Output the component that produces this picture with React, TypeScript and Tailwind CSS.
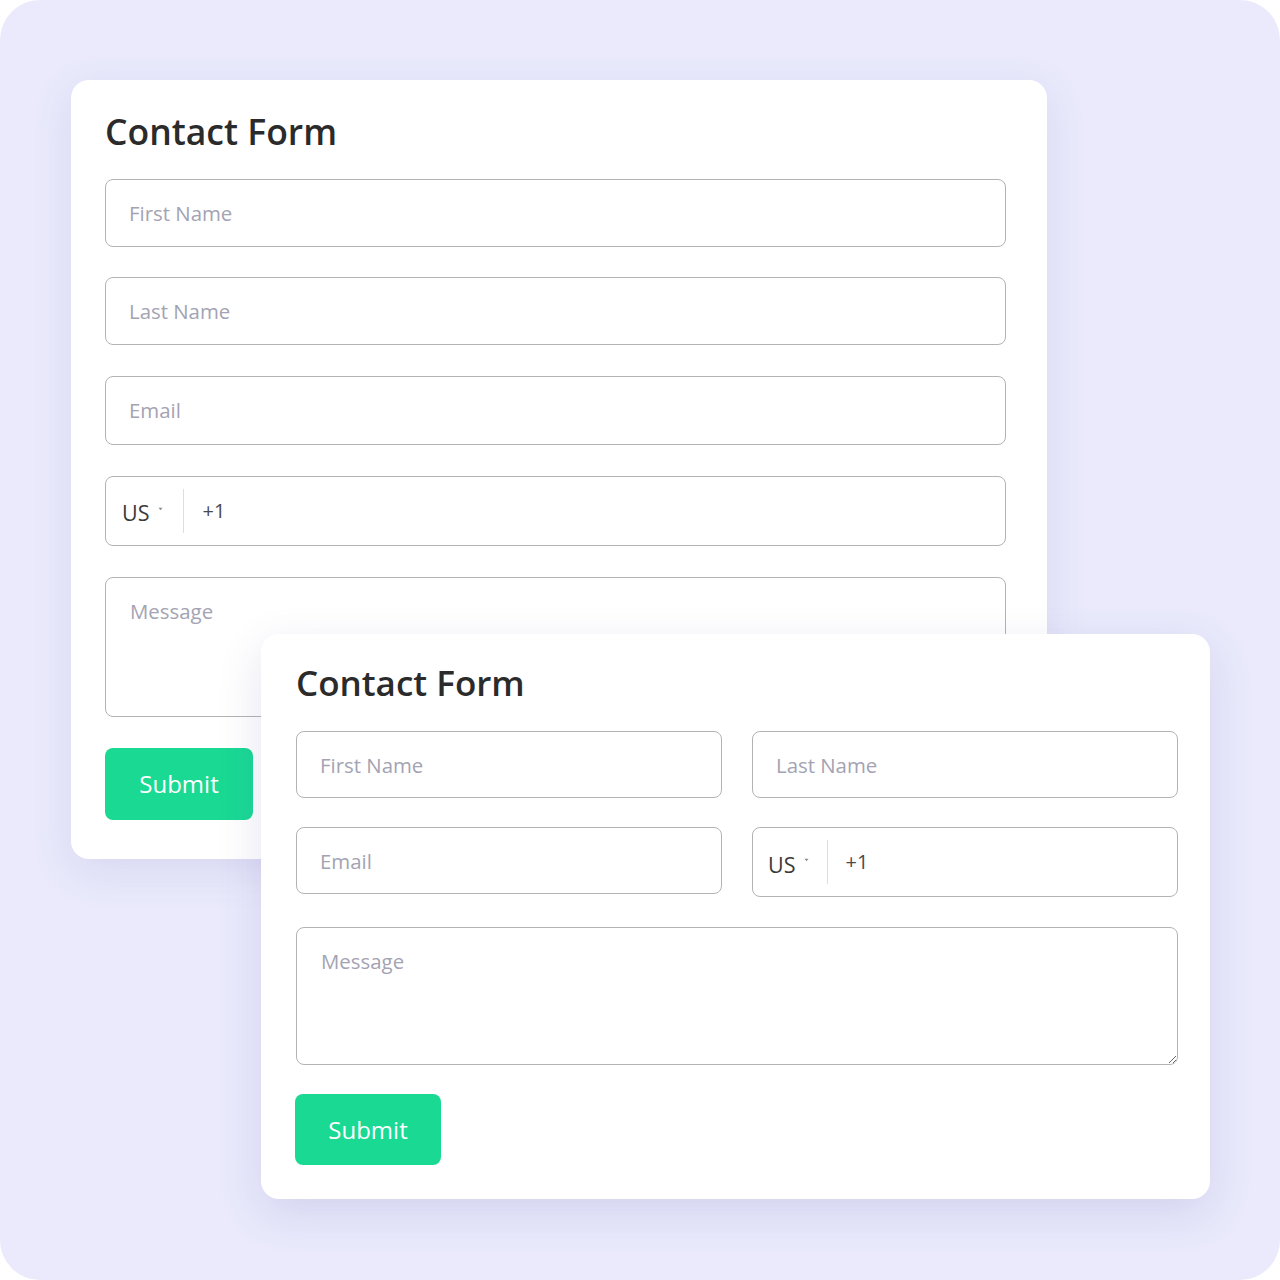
import React from "react";

const font = { fontFamily: '"Open Sans", "Noto Sans", sans-serif' };

function Field({ placeholder, className }: { placeholder: string; className: string }) {
  return (
    <input
      placeholder={placeholder}
      className={
        "block w-full rounded-[8px] border border-[#b3b3b3] bg-white px-[23px] text-[20.4px] text-[#333] outline-none placeholder:text-[#a3a3b3] " +
        className
      }
      style={font}
    />
  );
}

function Caret() {
  return (
    <svg width="5" height="4" viewBox="0 0 5 4" className="ml-[9px] mt-[-4px]">
      <path d="M0.5 0.8 L4.5 0.8 L2.5 3.2 Z" fill="#8a8a8a" />
    </svg>
  );
}

function Phone({ className, usPad, dividerGap }: { className: string; usPad: string; dividerGap: string }) {
  return (
    <div
      className={
        "flex w-full items-center rounded-[8px] border border-[#b3b3b3] bg-white " + className
      }
      style={font}
    >
      <div className={"flex items-center " + usPad}>
        <span className="mt-[6px] text-[21.5px] text-[#3a3a3a]">US</span>
        <Caret />
      </div>
      <div className={"h-[44px] w-px bg-[#dedede] " + dividerGap} />
      <span className="text-[20px] text-[#4a4a4a]">+1</span>
    </div>
  );
}

function Message({ className }: { className: string }) {
  return (
    <textarea
      placeholder="Message"
      className={
        "block w-full rounded-[8px] border border-[#b3b3b3] bg-white px-[24px] pt-[18px] text-[20.4px] text-[#333] outline-none placeholder:text-[#a3a3b3] " +
        className
      }
      style={font}
    />
  );
}

function Submit({ className }: { className: string }) {
  return (
    <button
      className={
        "flex items-center justify-center rounded-[8px] bg-[#19d993] text-[24px] text-white " + className
      }
      style={font}
    >
      Submit
    </button>
  );
}

export default function App() {
  return (
    <div className="h-[1280px] w-[1280px] bg-white">
      <div className="relative h-[1280px] w-[1280px] overflow-hidden rounded-[40px] bg-[#eaeafc]">
        {/* Card 1 */}
        <div className="absolute left-[71px] top-[80px] h-[779px] w-[976px] rounded-[18px] bg-white pl-[34px] pt-[30px] shadow-[0_12px_40px_rgba(90,90,170,0.13)]">
          <h2 className="text-[35.5px] font-semibold leading-[1.2] text-[#2b2b2b]" style={font}>
            Contact Form
          </h2>
          <div className="mt-[26px] flex w-[901px] flex-col">
            <Field placeholder="First Name" className="h-[68px]" />
            <Field placeholder="Last Name" className="mt-[30px] h-[68px]" />
            <Field placeholder="Email" className="mt-[31px] h-[69px]" />
            <Phone className="mt-[31px] h-[70px]" usPad="pl-[16px]" dividerGap="ml-[20px] mr-[18px]" />
            <Message className="mt-[31px] h-[140px] resize-none" />
            <Submit className="mt-[31px] h-[72px] w-[148px]" />
          </div>
        </div>

        {/* Card 2 */}
        <div className="absolute left-[261px] top-[634px] h-[565px] w-[949px] rounded-[18px] bg-white pl-[35px] pt-[28px] shadow-[0_14px_44px_rgba(90,90,170,0.16)]">
          <h2 className="text-[35px] font-semibold leading-[1.2] text-[#2b2b2b]" style={font}>
            Contact Form
          </h2>
          <div className="mt-[27px] grid w-[882px] grid-cols-2 gap-x-[30px]">
            <Field placeholder="First Name" className="h-[67px]" />
            <Field placeholder="Last Name" className="h-[67px]" />
            <Field placeholder="Email" className="mt-[29px] h-[67px]" />
            <Phone className="mt-[29px] h-[70px]" usPad="pl-[15px]" dividerGap="ml-[18px] mr-[17px]" />
          </div>
          <div className="w-[882px]">
            <Message className="mt-[30px] h-[138px]" />
            <Submit className="-ml-px mt-[29px] h-[71px] w-[146px]" />
          </div>
        </div>
      </div>
    </div>
  );
}
